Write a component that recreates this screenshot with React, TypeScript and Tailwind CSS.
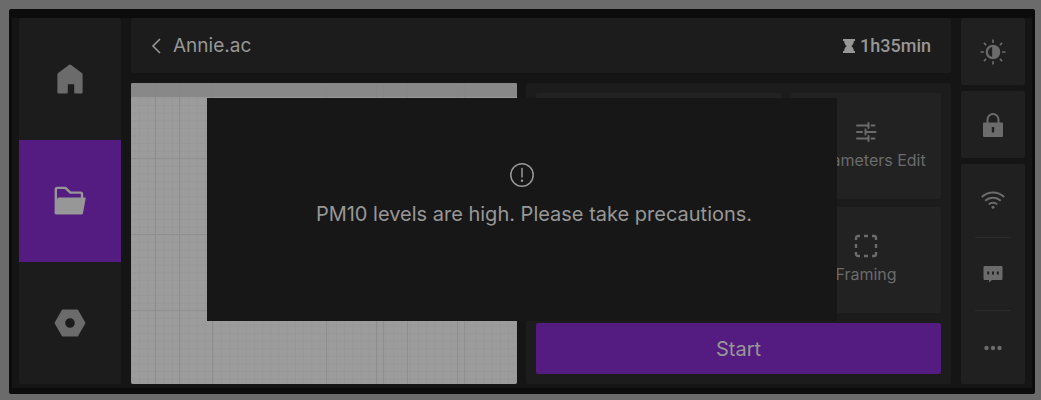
import type { ReactNode } from 'react'

const majorX = [24, 48, 81, 195, 245, 252, 276, 326, 333]
const majorY = [75, 151, 227]

function WorkArea() {
  return (
    <section aria-label="Work area" className="overflow-hidden rounded-xs bg-[#9c9c9c]">
      <svg className="block h-full w-full" aria-hidden="true">
        <defs>
          <pattern id="cell" x="0" y="7" width="8.2" height="7.6" patternUnits="userSpaceOnUse">
            <path d="M0 .5H8.2M.5 0V7.6" stroke="#969696" strokeWidth=".8" />
          </pattern>
        </defs>
        <rect width="100%" height="100%" fill="url(#cell)" />
        {majorX.map((x) => (
          <line key={x} x1={x + 0.5} x2={x + 0.5} y1="0" y2="100%" stroke="#8f8f8f" />
        ))}
        {majorY.map((y) => (
          <line key={y} x1="0" x2="100%" y1={y + 0.5} y2={y + 0.5} stroke="#8f8f8f" />
        ))}
        <rect width="100%" height="14" fill="#858585" fillOpacity=".85" />
      </svg>
    </section>
  )
}

function NavItem({ label, active, children }: { label: string; active?: boolean; children: ReactNode }) {
  return (
    <a
      href="#"
      aria-label={label}
      className={
        active
          ? 'flex items-center justify-center bg-[#541b80] text-[#979797]'
          : 'flex items-center justify-center bg-[#1c1c1c] text-[#6b6b6b]'
      }
    >
      {children}
    </a>
  )
}

function Sidebar() {
  return (
    <nav className="grid w-[102px] shrink-0 grid-rows-3 overflow-hidden rounded-xs">
      <NavItem label="Home">
        <svg width="32" height="32" viewBox="0 0 32 32" fill="currentColor">
          <path d="M15.2 1.8a1.4 1.4 0 0 1 1.6 0l11 8.300c.5.4.8.9.8 1.500v17.600c0 .8-.6 1.300-1.300 1.300h-5.800c-.7 0-1.300-.5-1.300-1.300v-7.900h-6.400v7.900c0 .8-.6 1.300-1.300 1.300H4.700c-.7 0-1.300-.5-1.300-1.300V11.600c0-.6.3-1.100.8-1.500z" />
        </svg>
      </NavItem>
      <NavItem label="Files" active>
        <svg width="32" height="30" viewBox="0 0 32 30">
          <path
            d="M1.800 27V3.500C1.800 2.500 2.300 1.900 3.300 1.900H11.500L16.300 6.600H26.500C27.500 6.600 28 7.100 28 8.100V13"
            fill="none"
            stroke="currentColor"
            strokeWidth="2.400"
          />
          <path d="M4.500 11.500H30.500c1 0 1.300.5 1.100 1.400L29 27c-.2 1-.6 1.400-1.500 1.400H2c-.8 0-1.300-.5-1.300-1.300L3.200 13c.2-1 .5-1.500 1.300-1.500z" fill="currentColor" />
        </svg>
      </NavItem>
      <NavItem label="Settings">
        <svg width="32" height="28" viewBox="0 0 32 28" fill="currentColor">
          <path
            fillRule="evenodd"
            d="M8.800.5H23.200a1 1 0 0 1 .9.5L31.300 13.500a1 1 0 0 1 0 1L24.100 27a1 1 0 0 1-.9.5H8.800a1 1 0 0 1-.9-.5L.7 14.500a1 1 0 0 1 0-1L7.900 1a1 1 0 0 1 .9-.5zM16 9.200a4.800 4.800 0 1 0 0 9.600 4.800 4.800 0 0 0 0-9.600z"
          />
        </svg>
      </NavItem>
    </nav>
  )
}

function Header() {
  return (
    <header className="flex h-[55px] items-center justify-between rounded-xs bg-[#1c1c1c] px-5">
      <a href="#" className="flex items-center gap-3 text-[19px] leading-7 text-[#979797]">
        <svg width="10" height="16" viewBox="0 0 10 16" fill="none" stroke="currentColor" strokeWidth="1.600">
          <path d="M9 1L2 8l7 7" />
        </svg>
        <h1>Annie.ac</h1>
      </a>
      <p className="flex items-center gap-1 font-[Roboto,sans-serif] text-lg font-medium text-[#979797]">
        <svg width="14" height="16" viewBox="0 0 14 16" fill="currentColor" aria-hidden="true">
          <path d="M1 1H13V3H11.800C11.800 5.600 10.800 7 9.300 8c1.500 1 2.500 2.800 2.500 5H13v2H1v-2H2.200c0-2.200 1-4 2.500-5C3.200 7 2.200 5.600 2.200 3H1z" />
        </svg>
        1h35min
      </p>
    </header>
  )
}

function Card({ label, children }: { label: string; children: ReactNode }) {
  return (
    <button type="button" className="flex flex-col items-center justify-center gap-1 rounded-xs bg-[#222] text-base whitespace-nowrap text-[#6b6b6b]">
      {children}
      {label}
    </button>
  )
}

function Controls() {
  return (
    <section className="flex flex-col gap-[10px] rounded-xs bg-[#1c1c1c] p-[10px]">
      <div className="grid flex-1 grid-cols-[245fr_150fr] grid-rows-2 gap-x-[10px] gap-y-2">
        <div className="row-span-2 rounded-xs bg-[#222]" />
        <Card label="Parameters Edit">
          <svg width="24" height="24" viewBox="0 0 24 24" fill="none" stroke="currentColor" strokeWidth="2" strokeLinecap="round">
            <path d="M3 5.500H13.500M17.500 5.500H20.500M14.500 3V8M3 12H8M11.500 12H21.500M11.500 9.500V14.500M3 18.500H13.500M17.500 18.500H20.500M14.500 16V21" />
          </svg>
        </Card>
        <Card label="Framing">
          <svg width="24" height="24" viewBox="0 0 24 24" fill="none" stroke="currentColor" strokeWidth="2.400">
            <path d="M2 6V4a2 2 0 0 1 2-2H6M10 2H14M18 2H20a2 2 0 0 1 2 2V6M22 10V14M22 18V20a2 2 0 0 1-2 2H18M14 22H10M6 22H4a2 2 0 0 1-2-2V18M2 14V10" />
          </svg>
        </Card>
      </div>
      <button type="button" className="h-[51px] rounded-xs bg-[#541b80] text-xl text-[#979797]">
        Start
      </button>
    </section>
  )
}

function StatusRail() {
  return (
    <aside className="flex w-16 shrink-0 flex-col gap-[6px] text-[#6b6b6b]">
      <button type="button" aria-label="Brightness" className="flex h-[67px] items-center justify-center rounded-xs bg-[#202020]">
        <svg width="26" height="26" viewBox="0 0 26 26" fill="none" stroke="currentColor" strokeWidth="1.700" strokeLinecap="round">
          <circle cx="13" cy="13" r="6.200" strokeWidth="2.200" />
          <path d="M13 7.500a5.500 5.500 0 0 1 0 11z" fill="currentColor" />
          <path d="M13 1.200V3.200M13 22.800V24.800M1.200 13H3.200M22.800 13H24.800M4.400 4.400L5.600 5.600M20.400 20.400L21.600 21.600M4.400 21.600L5.600 20.400M20.400 5.600L21.600 4.400" />
        </svg>
      </button>
      <button type="button" aria-label="Lock" className="flex h-[67px] items-center justify-center rounded-xs bg-[#202020]">
        <svg width="22" height="26" viewBox="0 0 22 26">
          <path d="M5.500 11V7.500a5.500 5.500 0 0 1 11 0V11" fill="none" stroke="currentColor" strokeWidth="2" />
          <path fillRule="evenodd" fill="currentColor" d="M2 10.500H20a1 1 0 0 1 1 1V24a1 1 0 0 1-1 1H2a1 1 0 0 1-1-1V11.500a1 1 0 0 1 1-1zM9.800 15V20.500h2.400V15z" />
        </svg>
      </button>
      <div className="flex flex-1 flex-col divide-y divide-[#2b2b2b] rounded-xs bg-[#202020] px-[14px]">
        <button type="button" aria-label="Wi-Fi" className="flex flex-1 items-center justify-center">
          <svg width="24" height="18" viewBox="0 0 24 18" fill="none" stroke="currentColor" strokeWidth="2">
            <path d="M.8 6a16 16 0 0 1 22.400 0M4.200 9.800a11.200 11.200 0 0 1 15.600 0M7.700 13.400a6.200 6.200 0 0 1 8.600 0" />
            <circle cx="12" cy="16.200" r="1.500" fill="currentColor" stroke="none" />
          </svg>
        </button>
        <button type="button" aria-label="Messages" className="flex flex-1 items-center justify-center">
          <svg width="20" height="18" viewBox="0 0 20 18">
            <path d="M1.500 1H18.500a1 1 0 0 1 1 1V14a1 1 0 0 1-1 1H9l-3 2.500V15H1.500a1 1 0 0 1-1-1V2a1 1 0 0 1 1-1z" fill="currentColor" />
            <path d="M5.200 6.500V9.500M10 6.500V9.500M14.800 6.500V9.500" stroke="#202020" strokeWidth="2" />
          </svg>
        </button>
        <button type="button" aria-label="More" className="flex flex-1 items-center justify-center">
          <svg width="18" height="6" viewBox="0 0 18 6" fill="currentColor">
            <circle cx="2.500" cy="3" r="2.200" />
            <circle cx="9" cy="3" r="2.200" />
            <circle cx="15.500" cy="3" r="2.200" />
          </svg>
        </button>
      </div>
    </aside>
  )
}

function Notice() {
  return (
    <div
      role="alertdialog"
      aria-describedby="notice-text"
      className="absolute top-[89px] left-1/2 flex h-[223px] w-[630px] max-w-full -translate-x-1/2 flex-col items-center bg-[#171717] pt-16 text-[#979797]"
    >
      <svg width="26" height="26" viewBox="0 0 26 26" fill="none" stroke="currentColor" strokeWidth="1.500" aria-hidden="true">
        <circle cx="13" cy="13" r="11.200" />
        <path d="M13 6.500V15" strokeLinecap="round" />
        <circle cx="13" cy="18.800" r="1.200" fill="currentColor" stroke="none" />
      </svg>
      <p id="notice-text" className="mt-3 pl-6 text-xl">
        PM10 levels are high. Please take precautions.
      </p>
    </div>
  )
}

export default function App() {
  return (
    <div className="flex min-h-screen bg-[#6b6b6b] pt-[9px] pr-[6px] pb-[6px] pl-[9px] font-[Inter,sans-serif]">
      <div className="relative flex flex-1 rounded-xs bg-[#0c0c0c] px-[3px] pt-[9px] pb-[6px]">
        <div className="flex flex-1 bg-[#151515] px-[7px] pb-1">
          <Sidebar />
          <main className="mx-[10px] flex min-w-0 flex-1 flex-col gap-[10px]">
            <Header />
            <div className="grid flex-1 grid-cols-[386fr_425fr] gap-[9px]">
              <WorkArea />
              <Controls />
            </div>
          </main>
          <StatusRail />
        </div>
        <Notice />
      </div>
    </div>
  )
}
